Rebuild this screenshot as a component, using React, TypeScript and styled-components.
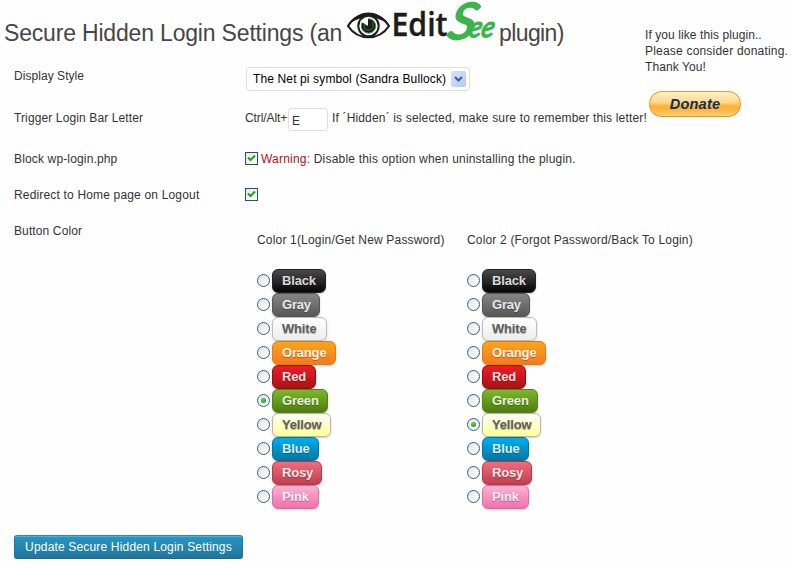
import React, { useState } from "react";
import styled, { createGlobalStyle } from "styled-components";

const GlobalStyle = createGlobalStyle`
  body {
    margin: 0;
    background: #fff;
    color: #333;
    font: 12px/16px "Liberation Sans", Arial, sans-serif;
    overflow: hidden;
  }
  * { box-sizing: border-box; }
`;

const Page = styled.div`
  display: flex;
  width: 792px;
  height: 567px;
  white-space: nowrap;
  background: #fefefe;
`;

const Main = styled.main`
  display: flex;
  flex-direction: column;
  align-items: flex-start;
  width: 645px;
`;

const Title = styled.h1`
  display: flex;
  align-items: flex-start;
  height: 59px;
  margin: 0;
  padding-left: 4px;
  font-size: 23px;
  font-weight: 400;
  line-height: 26px;
  color: #464646;
`;

const TitleText = styled.span<{ $width: number; $spacing: number }>`
  width: ${(p) => p.$width}px;
  padding-top: 20px;
  letter-spacing: ${(p) => p.$spacing}px;
`;

const Logo = styled.svg`
  display: block;
  width: 152px;
  height: 44px;
  overflow: visible;
`;

const Row = styled.div<{ $height: number }>`
  display: flex;
  align-items: flex-start;
  height: ${(p) => p.$height}px;
  padding-left: 14px;
`;

const Label = styled.div<{ $spacing: number }>`
  width: 231px;
  padding-top: 9px;
  letter-spacing: ${(p) => p.$spacing}px;
`;

const Text = styled.span<{ $spacing: number }>`
  letter-spacing: ${(p) => p.$spacing}px;
`;

const Warning = styled.span`
  color: #b80e0e;
`;

const Select = styled.button`
  display: flex;
  align-items: center;
  justify-content: space-between;
  width: 224px;
  height: 24px;
  margin: 8px 0 0 1px;
  padding: 0 3px 0 6px;
  border: 1px solid #dfdfdf;
  border-radius: 3px;
  background: #fff;
  color: #000;
  font: inherit;
`;

const Arrow = styled.svg`
  width: 15px;
  height: 16px;
  border-radius: 2px;
  background: linear-gradient(135deg, #d5e2ff, #b3cafa);
`;

const Field = styled.div<{ $top: number }>`
  display: flex;
  align-items: center;
  height: 24px;
  margin-top: ${(p) => p.$top}px;
`;

const Prefix = styled.span`
  width: 42px;
  letter-spacing: -0.1px;
`;

const LetterInput = styled.input`
  width: 40px;
  height: 23px;
  margin: 3px 4px 0 1px;
  padding: 2px 3px 0;
  border: 1px solid #dfdfdf;
  border-radius: 3px;
  background: #fff;
  color: #333;
  font: 12px "Liberation Sans", Arial, sans-serif;
`;

const CheckButton = styled.button`
  display: flex;
  width: 13px;
  height: 13px;
  margin: 0 3px 2px 0;
  padding: 0;
  border: 1px solid #1c5180;
  background: linear-gradient(135deg, #e6e6e2, #fff);
`;

const Palette = styled.div`
  display: flex;
  padding: 18px 0 0 12px;
`;

const Column = styled.div`
  width: 210px;
`;

const ColumnTitle = styled.div<{ $spacing: number }>`
  height: 37px;
  letter-spacing: ${(p) => p.$spacing}px;
`;

const Option = styled.div`
  display: flex;
  align-items: center;
  height: 24px;
`;

const Radio = styled.button<{ $on: boolean }>`
  display: grid;
  place-items: center;
  width: 13px;
  height: 13px;
  margin: 0 2px 2px 0;
  padding: 0;
  border: 1px solid #2f5f8f;
  border-radius: 50%;
  background: linear-gradient(135deg, #e2e2dd, #fff);

  &::after {
    content: "";
    width: 5px;
    height: 5px;
    border-radius: 50%;
    background: ${(p) => (p.$on ? "radial-gradient(circle at 40% 35%, #55d551, #168a16)" : "transparent")};
  }
`;

const Swatch = styled.div<{ $w: number; $from: string; $to: string; $edge: string; $ink: string }>`
  width: ${(p) => p.$w}px;
  height: 24px;
  padding-left: 9px;
  border: 1px solid ${(p) => p.$edge};
  border-radius: 6px;
  background: linear-gradient(${(p) => p.$from}, ${(p) => p.$to});
  box-shadow: 0 1px 2px rgba(0, 0, 0, 0.2);
  color: ${(p) => p.$ink};
  font-size: 13px;
  font-weight: 700;
  letter-spacing: -0.18px;
  line-height: 22px;
  text-shadow: 0 1px 1px rgba(0, 0, 0, 0.3);
`;

const Submit = styled.button`
  width: 229px;
  height: 24px;
  margin: 0 0 0 14px;
  padding: 0;
  border: 1px solid #21759b;
  border-top-color: #278ab7;
  border-bottom-color: #1e6a8d;
  border-radius: 3px;
  background: linear-gradient(#2a95c5, #21759b);
  box-shadow: inset 0 1px 0 rgba(120, 200, 230, 0.5);
  color: #fff;
  font: 12px/22px "Liberation Sans", Arial, sans-serif;
  letter-spacing: 0.17px;
`;

const Aside = styled.aside`
  flex: none;
  width: 147px;
  padding-top: 27px;
`;

const Donate = styled.button`
  display: block;
  width: 92px;
  height: 26px;
  margin: 16px 0 0 4px;
  padding: 0;
  border: 1px solid #e89c2b;
  border-bottom-color: #f09010;
  border-radius: 13px;
  background: linear-gradient(#fff0cc 0%, #ffe3a5 25%, #ffd583 45%, #ffb23a 58%, #ffb63f 75%, #ffd076 100%);
  color: #0c3158;
  font: italic 700 14.5px/22px "Liberation Sans", Arial, sans-serif;
  letter-spacing: 0.25px;
`;

interface SwatchSpec {
  name: string;
  w: number;
  from: string;
  to: string;
  edge: string;
  ink: string;
}

const swatches: SwatchSpec[] = [
  { name: "Black", w: 54, from: "#4a4a4a", to: "#050505", edge: "#222", ink: "#d9d9d9" },
  { name: "Gray", w: 48, from: "#858585", to: "#585858", edge: "#555", ink: "#e9e9e9" },
  { name: "White", w: 55, from: "#fff", to: "#ededed", edge: "#bcbcbc", ink: "#606060" },
  { name: "Orange", w: 64, from: "#faa51a", to: "#f47a20", edge: "#dd7d16", ink: "#fef4e9" },
  { name: "Red", w: 44, from: "#ed1c24", to: "#aa1317", edge: "#980c10", ink: "#faddde" },
  { name: "Green", w: 56, from: "#7db72f", to: "#4e7d0e", edge: "#538312", ink: "#e8f0de" },
  { name: "Yellow", w: 59, from: "#fffffb", to: "#ffff94", edge: "#b7b7ae", ink: "#606060" },
  { name: "Blue", w: 47, from: "#00adee", to: "#0078a5", edge: "#0076a3", ink: "#d9eef7" },
  { name: "Rosy", w: 50, from: "#f16c7c", to: "#bf404f", edge: "#b73948", ink: "#fae7e9" },
  { name: "Pink", w: 47, from: "#feb1d3", to: "#f171ab", edge: "#d2729e", ink: "#feeef5" },
];

function EditSeeLogo() {
  return (
    <Logo viewBox="0 0 152 44" role="img" aria-label="EditSee">
      <path d="M1 26C10 11 32 10 42 26C32 41 11 41 1 26Z" fill="#fff" stroke="#1d1d1b" strokeWidth="2.2" />
      <path d="M0 26C11 8 32 8 43 26C32 14.5 11 14.5 0 26Z" fill="#1d1d1b" />
      <circle cx="21.5" cy="26" r="10.2" fill="#fff" stroke="#1d1d1b" strokeWidth="2" />
      <circle cx="21.5" cy="26" r="7.2" fill="#1d1d1b" stroke="#39994a" strokeWidth="1" />
      <path d="M13 21L21 17.5V26Z" fill="#fff" />
      <path d="M17.5 24C16.5 28 18.5 30.5 22 30C25.5 29.5 27 26 25.5 22.5" fill="none" stroke="#398347" strokeWidth="0.9" />
      <text
        x="44.5" y="36" textLength="56" lengthAdjust="spacingAndGlyphs"
        fill="#1d1d1b" fontFamily="Open Sans" fontSize="32" fontWeight="600"
        stroke="#1d1d1b" strokeWidth="0.4"
      >Edit</text>
      <g transform="translate(99 39) skewX(-14)" fill="#3cb44b" stroke="#3cb44b" fontFamily="Lato" fontStyle="italic">
        <text fontSize="50" fontWeight="400" strokeWidth="2" textLength="27" lengthAdjust="spacingAndGlyphs">S</text>
        <text x="21" y="-2" fontSize="29" fontWeight="400" strokeWidth="1.4" textLength="25" lengthAdjust="spacingAndGlyphs">ee</text>
      </g>
    </Logo>
  );
}

function Checkbox({ label }: { label: string }) {
  const [checked, setChecked] = useState(true);
  return (
    <CheckButton role="checkbox" aria-label={label} aria-checked={checked} onClick={() => setChecked(!checked)}>
      {checked && (
        <svg width="11" height="11" viewBox="0 0 11 11">
          <path d="M2 4.5L4.5 7L9 2.5" fill="none" stroke="#21a121" strokeWidth="2.1" />
        </svg>
      )}
    </CheckButton>
  );
}

function ColorColumn({ title, spacing, initial }: { title: string; spacing: number; initial: string }) {
  const [selected, setSelected] = useState(initial);
  return (
    <Column role="radiogroup" aria-label={title}>
      <ColumnTitle $spacing={spacing}>{title}</ColumnTitle>
      {swatches.map((s) => (
        <Option key={s.name}>
          <Radio
            role="radio"
            aria-label={s.name}
            aria-checked={selected === s.name}
            $on={selected === s.name}
            onClick={() => setSelected(s.name)}
          />
          <Swatch $w={s.w} $from={s.from} $to={s.to} $edge={s.edge} $ink={s.ink}>{s.name}</Swatch>
        </Option>
      ))}
    </Column>
  );
}

export default function App() {
  return (
    <Page>
      <GlobalStyle />
      <Main>
        <Title>
          <TitleText $width={343} $spacing={-0.18}>Secure Hidden Login Settings (an</TitleText>
          <EditSeeLogo />
          <TitleText $width={70} $spacing={-0.6}>plugin)</TitleText>
        </Title>
        <Row $height={42}>
          <Label $spacing={0.05}>Display Style</Label>
          <Select>
            <Text $spacing={0.13}>The Net pi symbol (Sandra Bullock)</Text>
            <Arrow viewBox="0 0 15 16">
              <path d="M4 6L7.5 9.5L11 6" fill="none" stroke="#4d6185" strokeWidth="2.2" />
            </Arrow>
          </Select>
        </Row>
        <Row $height={41}>
          <Label $spacing={0.12}>Trigger Login Bar Letter</Label>
          <Field $top={5}>
            <Prefix>Ctrl/Alt+</Prefix>
            <LetterInput defaultValue="E" aria-label="Trigger letter" />
            <Text $spacing={0.16}>If ´Hidden´ is selected, make sure to remember this letter!</Text>
          </Field>
        </Row>
        <Row $height={36}>
          <Label $spacing={0.15}>Block wp-login.php</Label>
          <Field $top={5}>
            <Checkbox label="Block wp-login.php" />
            <Text $spacing={0.2}><Warning>Warning:</Warning> Disable this option when uninstalling the plugin.</Text>
          </Field>
        </Row>
        <Row $height={36}>
          <Label $spacing={0.17}>Redirect to Home page on Logout</Label>
          <Field $top={5}>
            <Checkbox label="Redirect to Home page on Logout" />
          </Field>
        </Row>
        <Row $height={321}>
          <Label $spacing={0.12}>Button Color</Label>
          <Palette>
            <ColorColumn title="Color 1(Login/Get New Password)" spacing={0.18} initial="Green" />
            <ColorColumn title="Color 2 (Forgot Password/Back To Login)" spacing={0.17} initial="Yellow" />
          </Palette>
        </Row>
        <Submit>Update Secure Hidden Login Settings</Submit>
      </Main>
      <Aside>
        <Text $spacing={0.2}>
          <Text $spacing={0.08}>If you like this plugin..</Text><br />
          Please consider donating.<br />
          <Text $spacing={0.1}>Thank You!</Text>
        </Text>
        <Donate>Donate</Donate>
      </Aside>
    </Page>
  );
}
